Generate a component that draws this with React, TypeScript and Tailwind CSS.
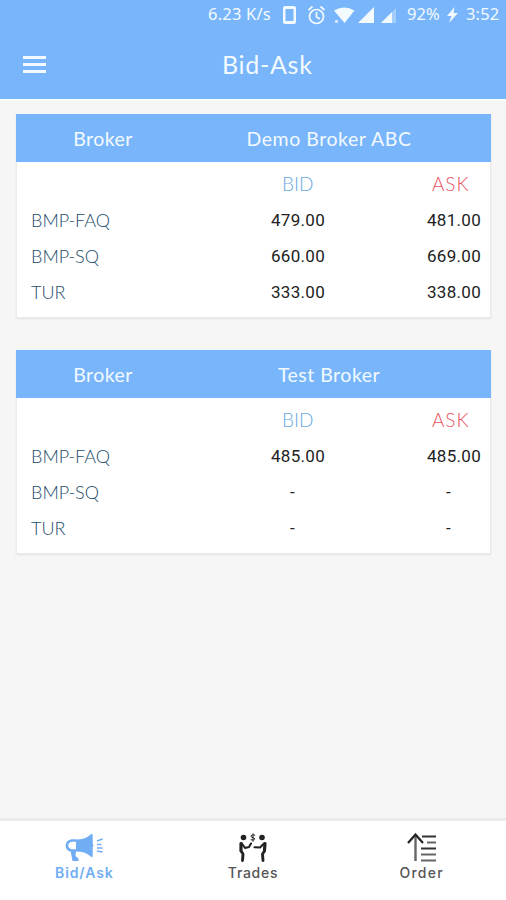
import type { ReactNode } from "react"

type Quote = { symbol: string; bid: string; ask: string }

const brokers: { name: string; spacing: string; quotes: Quote[] }[] = [
  {
    name: "Demo Broker ABC",
    spacing: "tracking-[0.55px]",
    quotes: [
      { symbol: "BMP-FAQ", bid: "479.00", ask: "481.00" },
      { symbol: "BMP-SQ", bid: "660.00", ask: "669.00" },
      { symbol: "TUR", bid: "333.00", ask: "338.00" },
    ],
  },
  {
    name: "Test Broker",
    spacing: "tracking-[0.5px]",
    quotes: [
      { symbol: "BMP-FAQ", bid: "485.00", ask: "485.00" },
      { symbol: "BMP-SQ", bid: "-", ask: "-" },
      { symbol: "TUR", bid: "-", ask: "-" },
    ],
  },
]

function StatusBar() {
  return (
    <div className="flex h-[30px] items-center pl-[208px] font-['Noto_Sans',sans-serif] text-[16.5px] leading-[30px] text-[#f3faff]">
      <span className="-mt-[2px] w-[75px] tracking-[0.2px] whitespace-nowrap">6.23 K/s</span>
      <svg width="116" height="22" viewBox="0 0 116 22" className="shrink-0" fill="#f3faff">
        <path fillRule="evenodd" d="M2 2h9q2 0 2 2v14q0 2-2 2H2q-2 0-2-2V4q0-2 2-2zM2.500 5v12h8V5z" />
        <g fill="none" stroke="#f3faff" strokeWidth="1.7">
          <circle cx="33.500" cy="12.500" r="7" />
          <path d="M33.500 8v5l3.500 2M25.500 6l4-3.500M41.500 6l-4-3.500" />
        </g>
        <path d="M51 6.500Q61 .5 71.500 6.500L61.500 19z" />
        <path d="M52 16h3v3h-3z" opacity=".7" />
        <path d="M91 3v16H75z" />
        <path d="M113 4v15H98z" opacity=".35" />
        <path d="M109 8v11H98z" />
      </svg>
      <span className="-mt-[2px] ml-[8px] w-[40px]">92%</span>
      <svg width="11" height="18" viewBox="0 0 11 18" className="shrink-0" fill="#f3faff">
        <path d="M7.500 1L0 10h4.500L2 17 11 7H6.500z" />
      </svg>
      <span className="-mt-[2px] ml-[8px] tracking-[0.15px]">3:52</span>
    </div>
  )
}

function Header() {
  return (
    <header className="h-[99px] bg-[#78b5fb]">
      <StatusBar />
      <div className="flex h-[69px] items-center pl-[23px]">
        <button className="flex w-[23px] flex-col gap-[4px]" aria-label="Menu">
          <span className="h-[3px] bg-[#f3faff]" />
          <span className="h-[3px] bg-[#f3faff]" />
          <span className="h-[3px] bg-[#f3faff]" />
        </button>
        <h1 className="-mt-[2px] ml-[176px] text-[25px] leading-[30px] tracking-[0.7px] text-[#f3faff]">Bid-Ask</h1>
      </div>
    </header>
  )
}

function Price({ value }: { value: string }) {
  return (
    <span className={`font-[Roboto,sans-serif] text-[17px] tracking-[0.3px] text-[#222] ${value === "-" ? "pl-[19px]" : ""}`}>
      {value}
    </span>
  )
}

function BrokerCard({ name, spacing, quotes }: { name: string; spacing: string; quotes: Quote[] }) {
  return (
    <section className="h-[204px] border border-t-0 border-[#ebebeb] bg-white shadow-[0_1px_2px_rgba(0,0,0,0.08)]">
      <div className="-mx-px flex h-[48px] items-center bg-[#78b5fb] pt-[2px] text-[19.5px] text-[#f3faff]">
        <span className="w-[174px] text-center tracking-[0.45px]">Broker</span>
        <span className={`w-[278px] text-center ${spacing}`}>{name}</span>
      </div>
      <div className="grid auto-rows-[36px] grid-cols-[240px_156px_1fr] items-center pt-[4px] pl-[14px]">
        <span />
        <span className="pl-[11px] text-[19px] font-light text-[#68aade]">BID</span>
        <span className="pl-[5px] text-[19px] font-light tracking-[0.9px] text-[#e8545f]">ASK</span>
        {quotes.map((q) => (
          <div key={q.symbol} className="contents">
            <span className="text-[18px] leading-[27px] font-light text-[#244c69]">{q.symbol}</span>
            <div className="pt-[2px]">
              <Price value={q.bid} />
            </div>
            <div className="pt-[2px]">
              <Price value={q.ask} />
            </div>
          </div>
        ))}
      </div>
    </section>
  )
}

function MegaphoneIcon() {
  return (
    <svg width="40" height="30" viewBox="0 0 40 30" fill="#70adf5">
      <path d="M27.500.8q1.200 0 1.200 2v8q1.500 1.700 0 3.500v8q0 2-1.200 2-5-5-11.500-5.500l-4-.3V6.500l4-.3q6.500-.5 11.500-5.400z" />
      <path d="M12 7.500H8Q3 8 3 12.500T8 17.500h4" fill="none" stroke="#70adf5" strokeWidth="2.600" />
      <path d="M6.500 17.500h5.500l-.5 5.500 3 2.500v2.500H8.500z" />
      <path d="M33 8l5.500-2M33 11.500h4.500M33 15h5.500M33 18l5.500 1" stroke="#70adf5" strokeWidth="1.400" />
    </svg>
  )
}

function TradesIcon() {
  return (
    <svg width="30" height="30" viewBox="0 0 30 30" fill="none" stroke="#222" strokeLinecap="round" strokeLinejoin="round">
      <circle cx="5.500" cy="4.500" r="2.800" fill="#222" stroke="none" />
      <circle cx="24" cy="4.500" r="2.800" fill="#222" stroke="none" />
      <path d="M3 10.500L3 17M27 10.500L26.500 17" strokeWidth="3.200" />
      <path d="M3.500 10L7 15l4-1 2-3.500M26 10.500l-4 4-5.500-.3" strokeWidth="2.100" />
      <path d="M3 18l2 3-.5 6.500M26.500 18l-2 3 .5 6.500" strokeWidth="2.900" />
      <path d="M16.800 2.200q-3.800-.8-3.800 1 0 1.200 2 1.500 2 .3 1.700 1.500-.3 1.500-3.700.6M15 .8v7.500" strokeWidth="1" />
    </svg>
  )
}

function OrderIcon() {
  return (
    <svg width="30" height="30" viewBox="0 0 30 30" fill="none">
      <path d="M8.500 28V2" stroke="#666" strokeWidth="2.400" />
      <path d="M1 10l7.500-8.500L16 10" stroke="#222" strokeWidth="2.200" />
      <path d="M15 3.500h14M14 15.500h15" stroke="#333" strokeWidth="2" />
      <path d="M20 9.500h9M14 21.500h15M14 27.500h15" stroke="#666" strokeWidth="2" />
    </svg>
  )
}

function NavItem({ label, icon, className }: { label: string; icon: ReactNode; className: string }) {
  return (
    <button className={`flex flex-1 flex-col items-center pt-[12px] font-[Inter,sans-serif] text-[14px] leading-[18px] ${className}`}>
      {icon}
      <span className="mt-[1px]">{label}</span>
    </button>
  )
}

export default function App() {
  return (
    <div className="flex h-[900px] w-[506px] flex-col overflow-hidden bg-[#f6f6f6] font-[Lato,sans-serif]">
      <Header />
      <main className="flex flex-1 flex-col gap-[32px] border-t-2 border-[#fcfefe] pt-[13px] pr-[15px] pl-[16px]">
        {brokers.map((broker) => (
          <BrokerCard key={broker.name} {...broker} />
        ))}
      </main>
      <nav className="flex h-[82px] border-t-[3px] border-[#ebebeb] bg-white">
        <NavItem label="Bid/Ask" icon={<MegaphoneIcon />} className="font-semibold tracking-[0.9px] text-[#70adf5]" />
        <NavItem label="Trades" icon={<TradesIcon />} className="font-medium tracking-[0.7px] text-[#555]" />
        <NavItem label="Order" icon={<OrderIcon />} className="font-medium tracking-[1.2px] text-[#555]" />
      </nav>
    </div>
  )
}
